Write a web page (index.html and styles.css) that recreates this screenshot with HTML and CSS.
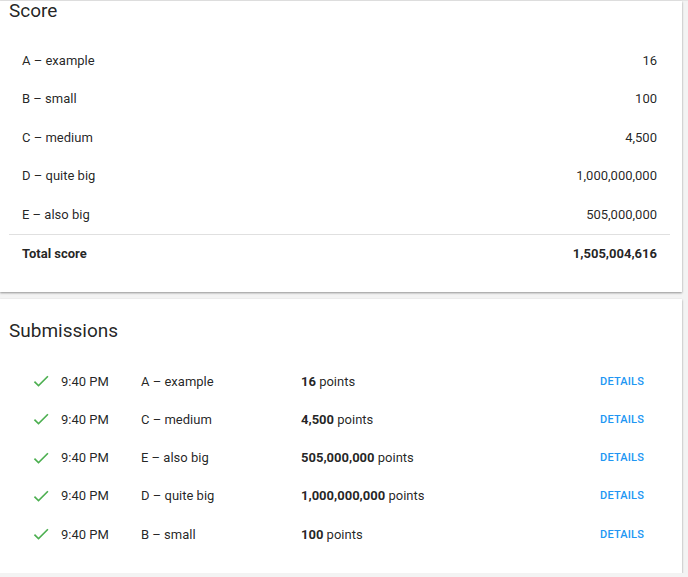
FILE: index.html
```html
<!DOCTYPE html>
<html>
<head>
<meta charset="utf-8">
<link rel="stylesheet" href="styles.css">
</head>
<body>
<div class="topline"></div>
<section class="card card-score">
  <h2 class="card-title">Score</h2>
  <div class="score-table">
    <div class="score-row"><span>A – example</span><span>16</span></div>
    <div class="score-row"><span>B – small</span><span>100</span></div>
    <div class="score-row"><span>C – medium</span><span>4,500</span></div>
    <div class="score-row"><span>D – quite big</span><span>1,000,000,000</span></div>
    <div class="score-row"><span>E – also big</span><span>505,000,000</span></div>
    <div class="score-row total"><span>Total score</span><span>1,505,004,616</span></div>
  </div>
</section>
<section class="card card-subs">
  <h2 class="card-title">Submissions</h2>
  <div class="sub-list">
    <div class="sub-row">
      <svg class="check" viewBox="0 0 24 24"><path d="M9 16.17L4.83 12l-1.42 1.41L9 19 21 7l-1.41-1.41z"/></svg>
      <span>9:40 PM</span><span>A – example</span><span><b>16</b> points</span><a class="details">DETAILS</a>
    </div>
    <div class="sub-row">
      <svg class="check" viewBox="0 0 24 24"><path d="M9 16.17L4.83 12l-1.42 1.41L9 19 21 7l-1.41-1.41z"/></svg>
      <span>9:40 PM</span><span>C – medium</span><span><b>4,500</b> points</span><a class="details">DETAILS</a>
    </div>
    <div class="sub-row">
      <svg class="check" viewBox="0 0 24 24"><path d="M9 16.17L4.83 12l-1.42 1.41L9 19 21 7l-1.41-1.41z"/></svg>
      <span>9:40 PM</span><span>E – also big</span><span><b>505,000,000</b> points</span><a class="details">DETAILS</a>
    </div>
    <div class="sub-row">
      <svg class="check" viewBox="0 0 24 24"><path d="M9 16.17L4.83 12l-1.42 1.41L9 19 21 7l-1.41-1.41z"/></svg>
      <span>9:40 PM</span><span>D – quite big</span><span><b>1,000,000,000</b> points</span><a class="details">DETAILS</a>
    </div>
    <div class="sub-row">
      <svg class="check" viewBox="0 0 24 24"><path d="M9 16.17L4.83 12l-1.42 1.41L9 19 21 7l-1.41-1.41z"/></svg>
      <span>9:40 PM</span><span>B – small</span><span><b>100</b> points</span><a class="details">DETAILS</a>
    </div>
  </div>
</section>
</body>
</html>
```
FILE: styles.css
```css
html, body {
  margin: 0;
  padding: 0;
}
body {
  background: #f3f3f3;
  font-family: Roboto, "Noto Sans", Arial, sans-serif;
  color: rgba(0, 0, 0, 0.87);
  font-size: 13px;
}
.topline {
  height: 1px;
  background: #e4e4e4;
}
.card {
  width: 682px;
  box-sizing: border-box;
  background: #fff;
  box-shadow: 0 1px 2px rgba(0, 0, 0, 0.4);
  padding: 0 12px 19px 9px;
}
.card-title {
  margin: 0;
  font-size: 19px;
  font-weight: 400;
  line-height: 20px;
}
.card-subs {
  margin-top: 7px;
  padding-top: 22px;
  padding-bottom: 20px;
}
.score-table {
  margin-top: 20px;
}
.score-row {
  height: 38.5px;
  display: flex;
  align-items: center;
  justify-content: space-between;
  padding: 0 13px;
}
.score-row.total {
  border-top: 1px solid #e0e0e0;
  font-weight: 700;
}
.sub-list {
  margin-top: 21px;
}
.sub-row {
  height: 38.25px;
  display: grid;
  grid-template-columns: 30px 80px 160px 299px 1fr;
  align-items: center;
  padding-left: 22px;
}
.sub-row b {
  font-weight: 700;
}
.check {
  width: 20px;
  height: 20px;
  fill: #4caf50;
  display: block;
}
.details {
  color: #2196f3;
  font-size: 11px;
  font-weight: 500;
  letter-spacing: 0.2px;
}
```
